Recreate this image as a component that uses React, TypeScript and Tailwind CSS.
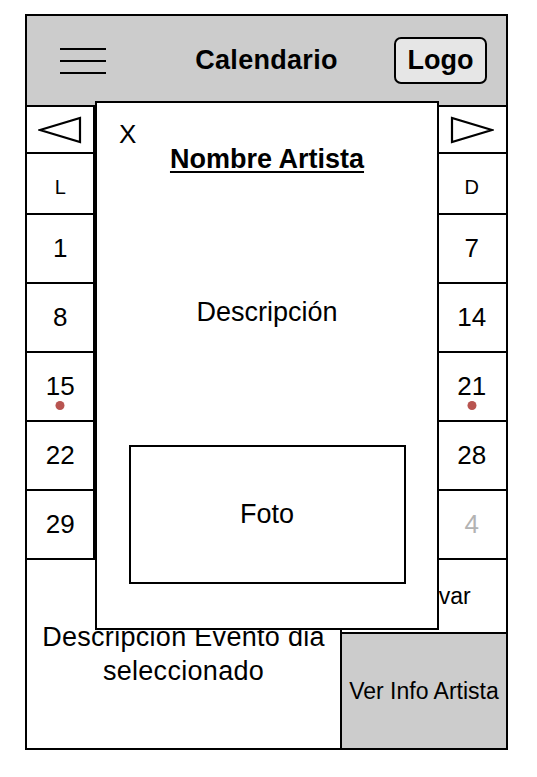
import React from 'react';

const weekDays = ['L', 'M', 'X', 'J', 'V', 'S', 'D'];

type Day = { n: number; muted?: boolean; event?: boolean };

const weeks: Day[][] = [
  [1, 2, 3, 4, 5, 6, 7].map((n) => ({ n })),
  [8, 9, 10, 11, 12, 13, 14].map((n) => ({ n })),
  [15, 16, 17, 18, 19, 20, 21].map((n) => ({ n, event: n === 15 || n === 21 })),
  [22, 23, 24, 25, 26, 27, 28].map((n) => ({ n })),
  [
    { n: 29 },
    { n: 30 },
    { n: 31 },
    { n: 1, muted: true },
    { n: 2, muted: true },
    { n: 3, muted: true },
    { n: 4, muted: true },
  ],
];

function Triangle({ dir }: { dir: 'left' | 'right' }) {
  return (
    <svg width="44" height="28" viewBox="0 0 44 28">
      {dir === 'left' ? (
        <polygon points="2,14 42,2 42,26" fill="none" stroke="#000" strokeWidth="2.2" />
      ) : (
        <polygon points="42,14 2,2 2,26" fill="none" stroke="#000" strokeWidth="2.2" />
      )}
    </svg>
  );
}

function Modal() {
  return (
    <div className="absolute left-[95px] top-[101px] w-[344px] h-[529px] border-2 border-black bg-white flex flex-col">
      <div className="pt-[19px] pl-[22px] text-[26px] leading-[24px]">X</div>
      <h2 className="text-center text-[27px] leading-[26px] font-bold underline decoration-2 underline-offset-[3px]">
        Nombre Artista
      </h2>
      <p className="mt-[127px] text-center text-[27px] leading-[26px]">Descripción</p>
      <div className="mt-[120px] mx-auto w-[277px] h-[139px] border-2 border-black flex items-center justify-center text-[27px]">
        Foto
      </div>
    </div>
  );
}

export default function App() {
  return (
    <div className="relative w-[537px] h-[777px] bg-white text-black font-['Liberation_Sans',Arial,sans-serif] pt-[14px] pl-[25px]">
      <div className="w-[483px] h-[736px] border-2 border-black flex flex-col">
        {/* header */}
        <div className="h-[91px] bg-[#cccccc] border-b-2 border-black grid grid-cols-[1fr_auto_1fr] items-center px-[19px]">
          <div className="ml-[14px] w-[46px] flex flex-col gap-[10px]">
            <span className="block h-[2px] bg-black" />
            <span className="block h-[2px] bg-black" />
            <span className="block h-[2px] bg-black" />
          </div>
          <h1 className="text-center text-[27px] font-bold tracking-[0.3px]">Calendario</h1>
          <div className="justify-self-end w-[93px] h-[47px] rounded-[7px] border-2 border-black bg-[#e6e6e6] flex items-center justify-center text-[27px] font-bold">
            Logo
          </div>
        </div>

        {/* month nav */}
        <div className="h-[47px] border-b-2 border-black grid grid-cols-7">
          <div className="border-r-2 border-black flex items-center justify-center">
            <Triangle dir="left" />
          </div>
          <div className="col-span-5 border-r-2 border-black" />
          <div className="flex items-center justify-center">
            <Triangle dir="right" />
          </div>
        </div>

        {/* weekday labels */}
        <div className="h-[61px] border-b-2 border-black grid grid-cols-7">
          {weekDays.map((d, i) => (
            <div
              key={d}
              className={`flex items-center justify-center pt-[6px] text-[20px] ${i < 6 ? 'border-r-2 border-black' : ''}`}
            >
              {d}
            </div>
          ))}
        </div>

        {/* days */}
        {weeks.map((week, wi) => (
          <div key={wi} className="h-[69px] border-b-2 border-black grid grid-cols-7">
            {week.map((day, i) => (
              <div
                key={i}
                className={`relative flex items-center justify-center text-[26px] ${i < 6 ? 'border-r-2 border-black' : ''} ${day.muted ? 'text-[#b3b3b3]' : ''}`}
              >
                {day.n}
                {day.event && (
                  <span className="absolute left-1/2 -translate-x-1/2 top-[48px] w-[9px] h-[9px] rounded-full bg-[#b85450]" />
                )}
              </div>
            ))}
          </div>
        ))}

        {/* bottom */}
        <div className="flex-1 flex">
          <div className="w-[315px] border-r-2 border-black flex items-center justify-center text-center text-[27px] leading-[34px] tracking-[0.3px] px-1">
            Descripcion Evento dia seleccionado
          </div>
          <div className="flex-1 flex flex-col">
            <div className="h-[74px] border-b-2 border-black flex items-center justify-center text-[23px]">
              Reservar
            </div>
            <div className="flex-1 bg-[#cccccc] flex items-center justify-center text-[23px]">
              Ver Info Artista
            </div>
          </div>
        </div>
      </div>

      <Modal />
    </div>
  );
}
